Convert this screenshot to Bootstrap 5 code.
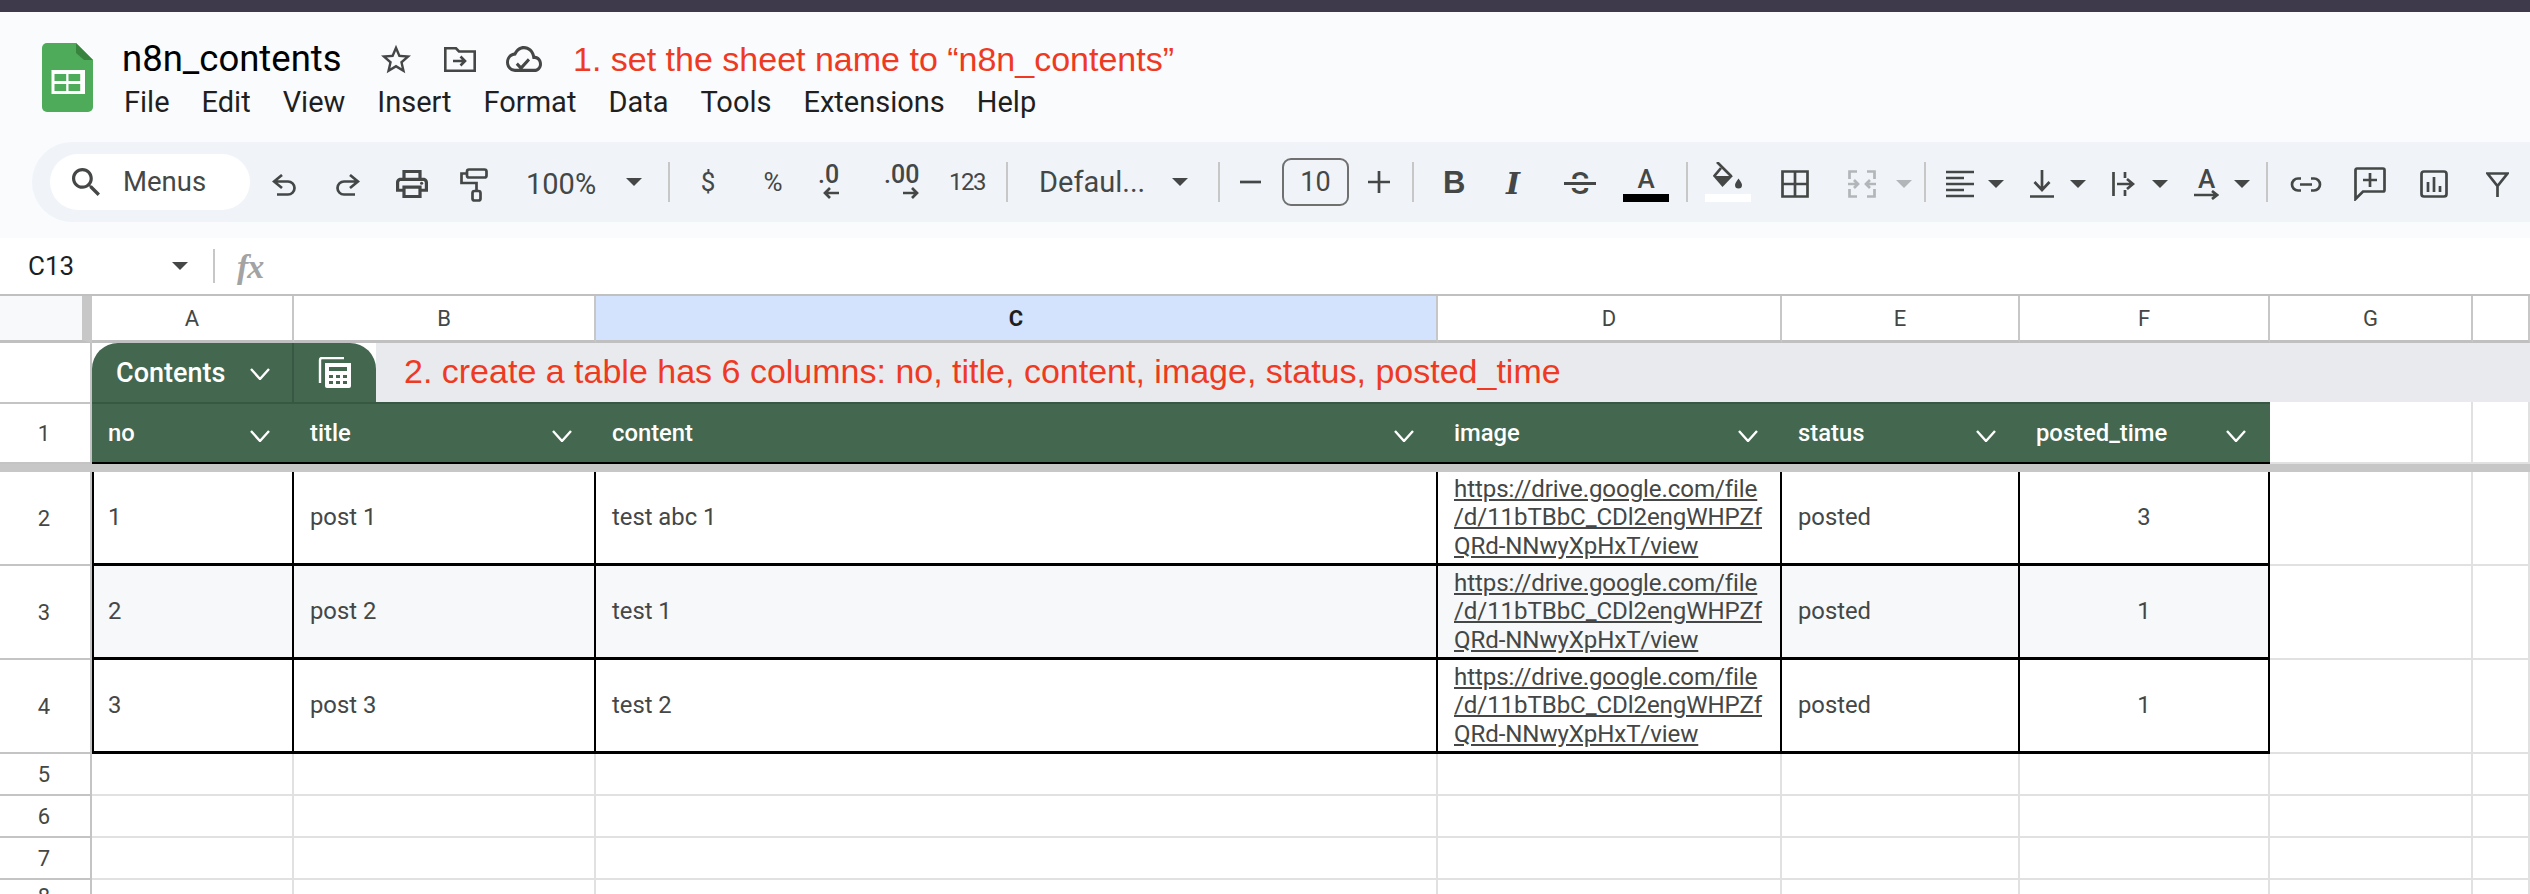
<!DOCTYPE html>
<html>
<head>
    <title>n8n_contents</title>
    <meta charset="UTF-8">
    <link href="https://cdn.jsdelivr.net/npm/bootstrap@5.3.0/dist/css/bootstrap.min.css" rel="stylesheet">
    <style>
        html, body { overflow: hidden; background: #fff; }
        body { width: 2530px; height: 894px; font-family: Roboto, sans-serif; color: #444746; }
        .top-strip { height: 12px; background: #3e3a4c; }
        .app-head { height: 226px; background: #f9fbfd; }
        .title-zone { height: 130px; padding-left: 42px; }
        .doc-logo { margin-top: 31px; }
        .title-side { margin-left: 29px; }
        .title-line { height: 46px; margin-top: 24px; }
        .doc-name { width: 220px; font-size: 36.5px; line-height: 46px; color: #000; }
        .star-ic { margin-left: 39px; }
        .move-ic { margin-left: 33px; }
        .cloud-ic { margin-left: 30px; }
        .note-red { font-family: "Liberation Sans", sans-serif; font-size: 34px; color: #ee3a22; white-space: nowrap; }
        .note-one { margin-left: 31px; }
        .menu-line { height: 46px; gap: 32px; margin-left: 2px; margin-top: -2px; font-size: 29px; color: #1f1f1f; }
        .tool-pill { height: 80px; margin-left: 32px; background: #f0f4f9; border-radius: 40px 0 0 40px; }
        .tool-item { flex: none; display: inline-flex; }
        .find-box { width: 200px; height: 56px; background: #fff; border-radius: 28px; padding-left: 22px; font-size: 27.5px; }
        .find-box span { margin-left: 23px; }
        .tool-text { font-size: 29px; line-height: 34px; white-space: nowrap; }
        .tool-sym { font-size: 26px; line-height: 34px; }
        .tool-num { font-size: 24px; line-height: 34px; letter-spacing: -1.5px; }
        .tool-sep { width: 2px; height: 40px; background: #c7c7c7; }
        .size-box { height: 48px; border: 2px solid #707070; border-radius: 9px; font-size: 27px; }
        .dec-stack { flex-direction: column; font-size: 25px; font-weight: 500; line-height: 20px; }
        .dec-stack svg { align-self: flex-end; margin-top: 2px; }
        .glyph-b { font-family: "Liberation Sans", sans-serif; font-weight: 700; font-size: 31px; line-height: 26px; }
        .glyph-i { font-family: "DejaVu Serif", serif; font-weight: 700; font-style: italic; font-size: 30px; line-height: 28px; }
        .glyph-s { position: relative; font-size: 31px; line-height: 28px; font-weight: 500; justify-content: center; }
        .glyph-s i { position: absolute; left: 0; right: 0; top: 9px; height: 9px; background: #444746; border-top: 3px solid #f0f4f9; border-bottom: 3px solid #f0f4f9; }
        .glyph-a { flex-direction: column; align-items: center; font-size: 26px; font-weight: 500; line-height: 22px; }
        .color-bar { width: 46px; height: 8px; margin-top: 4px; }
        .color-bar-tight { margin-top: 2px; }
        .bar-black { background: #000; }
        .bar-white { background: #fff; }
        .fx-line { height: 56px; background: #fff; padding-left: 28px; }
        .cell-name { width: 144px; font-size: 26px; color: #1f1f1f; }
        .fx-sep { width: 2px; height: 34px; background: #c7c7c7; margin-left: 25px; }
        .fx-mark { margin-left: 22px; font-family: "Liberation Serif", serif; font-style: italic; font-weight: 700; font-size: 34px; color: #a3a3a3; letter-spacing: -1px; }
        .sh-row { display: grid; grid-template-columns: 92px 202px 302px 842px 344px 238px 250px 203px 57px; }
        .sh-cell { display: flex; align-items: center; min-width: 0; border-right: 2px solid #e1e1e1; border-bottom: 2px solid #e1e1e1; padding-left: 16px; padding-top: 1px; font-size: 23.8px; color: #444746; white-space: nowrap; }
        .sh-num { justify-content: center; padding: 0 2px 0 0; border-right: 2px solid #c4c4c4; border-bottom: 2px solid #c4c4c4; font-size: 22px; color: #444746; }
        .col-row { height: 49px; border-top: 2px solid #c0c0c0; }
        .col-row .sh-cell { justify-content: center; padding: 0; border-right-color: #c7c7c7; border-bottom: 3px solid #c0c0c0; font-size: 22px; }
        .col-corner { background: #f8f9fa; border-right: 10px solid #c7c7c7 !important; position: relative; }
        .col-on { background: #d3e3fd; color: #1f1f1f !important; font-weight: 700; }
        .band-row { height: 59px; display: flex; }
        .band-gap { width: 92px; background: #fff; border-right: 2px solid #c4c4c4; }
        .band-fill { flex: 1; background: #e8eaed; }
        .tab-box { width: 284px; height: 59px; background: #43674f; border-radius: 26px 26px 0 0; color: #fff; }
        .tab-name { width: 202px; padding-left: 24px; padding-right: 22px; padding-top: 2px; border-right: 2px solid #375843; height: 100%; font-size: 27px; font-weight: 500; }
        .tab-calc { flex: 1; }
        .note-two { margin-left: 28px; margin-top: -2px; }
        .row-one { height: 62px; }
        .row-one .sh-num { border-top: 2px solid #c4c4c4; }
        .sh-head { background: #43674f; color: #fff; font-weight: 500; justify-content: space-between; padding-top: 2px; padding-right: 24px; border-top: 2px solid #375843; border-right: 0; border-bottom: 2px solid #000; }
        .chev { margin-top: 3px; }
        .freeze-bar { height: 8px; background: #c7c7c7; }
        .row-data { height: 94px; }
        .row-slim { height: 42px; }
        .row-last { height: 20px; }
        .sh-data { border-right: 2px solid #000; border-bottom: 3px solid #000; }
        .sh-first { border-left: 2px solid #000; padding-left: 14px; }
        .row-alt .sh-data { background: #f6f8f9; }
        .sh-mid { justify-content: center; padding: 0; }
        .sh-link { font-size: 24.1px; line-height: 28.3px; text-decoration: underline; color: #444746; padding-right: 0; padding-top: 0; letter-spacing: -.1px; }
    </style>
</head>
<body>
    <div class="top-strip"></div>

    <div class="app-head">
        <div class="title-zone d-flex">
            <svg class="doc-logo" width="51" height="70" viewBox="0 0 51 70">
                <path d="M5 0H34L51 17V64a5 5 0 0 1-5 5H5a5 5 0 0 1-5-5V5a5 5 0 0 1 5-5z" fill="#4eab5a"/>
                <path d="M34 0L51 17H42L34 10z" fill="#38843f"/>
                <path d="M9.500 27h33.500v24h-33.500z" fill="#fff"/>
                <path d="M12.500 31h11.700v7h-11.700zM26.500 31h11.700v7h-11.700zM12.500 41h11.700v7h-11.700zM26.500 41h11.700v7h-11.700z" fill="#4eab5a"/>
            </svg>
            <div class="title-side">
                <div class="title-line d-flex align-items-center">
                    <span class="doc-name">n8n_contents</span>
                    <svg class="star-ic" width="30" height="30" viewBox="2 2 20 19" fill="#444746"><path d="M22 9.240l-7.190-.62L12 2 9.190 8.630 2 9.240l5.460 4.730L5.820 21 12 17.270 18.180 21l-1.630-7.030L22 9.240zM12 15.400l-3.760 2.270 1-4.280-3.320-2.880 4.380-.38L12 6.100l1.710 4.040 4.380.38-3.320 2.880 1 4.280L12 15.400z"/></svg>
                    <svg class="move-ic" width="32" height="25" viewBox="0 0 32 25" fill="none" stroke="#444746" stroke-width="2.600"><path d="M1.300 23.700V1.300H12L15 4.500H30.700V23.700z"/><path d="M9 14H21M16.500 9.500L21 14l-4.500 4.500"/></svg>
                    <svg class="cloud-ic" width="36" height="26" viewBox="0 4 24 16" preserveAspectRatio="none" fill="#444746"><path d="M19.350 10.040C18.670 6.590 15.640 4 12 4 9.110 4 6.600 5.640 5.350 8.040 2.340 8.360 0 10.910 0 14c0 3.310 2.690 6 6 6h13c2.760 0 5-2.240 5-5 0-2.640-2.050-4.780-4.650-4.960zM19 18H6c-2.210 0-4-1.790-4-4 0-2.050 1.530-3.760 3.560-3.970l1.070-.11.5-.95C8.080 7.140 9.940 6 12 6c2.620 0 4.880 1.860 5.390 4.430l.3 1.500 1.530.11c1.560.1 2.780 1.410 2.780 2.960 0 1.650-1.350 3-3 3zm-9-1.820l-2.090-2.090L6.500 15.500 10 19l6.010-6.010-1.410-1.410z"/></svg>
                    <span class="note-red note-one">1. set the sheet name to “n8n_contents”</span>
                </div>
                <div class="menu-line d-flex align-items-center">
                    <span>File</span><span>Edit</span><span>View</span><span>Insert</span><span>Format</span><span>Data</span><span>Tools</span><span>Extensions</span><span>Help</span>
                </div>
            </div>
        </div>
        <div id="toolPill" class="tool-pill d-flex align-items-center"></div>
    </div>

    <div class="fx-line d-flex align-items-center">
        <span class="cell-name">C13</span>
        <svg width="16" height="8" viewBox="0 0 16 8"><path d="M0 0H16L8 8z" fill="#444746"/></svg>
        <span class="fx-sep"></span>
        <span class="fx-mark">fx</span>
    </div>

    <div class="sh-row col-row">
        <div class="sh-cell col-corner"></div>
        <div class="sh-cell">A</div><div class="sh-cell">B</div><div class="sh-cell col-on">C</div><div class="sh-cell">D</div><div class="sh-cell">E</div><div class="sh-cell">F</div><div class="sh-cell">G</div><div class="sh-cell"></div>
    </div>

    <div class="band-row">
        <div class="band-gap"></div>
        <div class="tab-box d-flex">
            <div class="tab-name d-flex align-items-center justify-content-between">
                <span>Contents</span>
                <svg width="20" height="12" viewBox="0 0 20 12" fill="none" stroke="#fff" stroke-width="2.400"><path d="M1 1L10 11 19 1"/></svg>
            </div>
            <div class="tab-calc d-flex align-items-center justify-content-center">
                <svg width="34" height="32" viewBox="0 0 34 32" fill="none"><path d="M2 26V3a2 2 0 0 1 2-2H26" stroke="#fff" stroke-width="2.400"/><path d="M7 6H33V29a2 2 0 0 1-2 2H9a2 2 0 0 1-2-2z" fill="#fff"/><path d="M11 10H29V14H11zM11 18h4v3h-4zM18 18h4v3h-4zM25 18h4v3h-4zM11 24h4v3h-4zM18 24h4v3h-4zM25 24h4v3h-4z" fill="#43674f"/></svg>
            </div>
        </div>
        <div class="band-fill d-flex align-items-center"><span class="note-red note-two">2. create a table has 6 columns: no, title, content, image, status, posted_time</span></div>
    </div>

    <div class="sh-row row-one">
        <div class="sh-cell sh-num">1</div>
        <div class="sh-cell sh-head">no<svg class="chev" width="20" height="12" viewBox="0 0 20 12" fill="none" stroke="#fff" stroke-width="2.400"><path d="M1 1L10 11 19 1"/></svg></div>
        <div class="sh-cell sh-head">title<svg class="chev" width="20" height="12" viewBox="0 0 20 12" fill="none" stroke="#fff" stroke-width="2.400"><path d="M1 1L10 11 19 1"/></svg></div>
        <div class="sh-cell sh-head">content<svg class="chev" width="20" height="12" viewBox="0 0 20 12" fill="none" stroke="#fff" stroke-width="2.400"><path d="M1 1L10 11 19 1"/></svg></div>
        <div class="sh-cell sh-head">image<svg class="chev" width="20" height="12" viewBox="0 0 20 12" fill="none" stroke="#fff" stroke-width="2.400"><path d="M1 1L10 11 19 1"/></svg></div>
        <div class="sh-cell sh-head">status<svg class="chev" width="20" height="12" viewBox="0 0 20 12" fill="none" stroke="#fff" stroke-width="2.400"><path d="M1 1L10 11 19 1"/></svg></div>
        <div class="sh-cell sh-head">posted_time<svg class="chev" width="20" height="12" viewBox="0 0 20 12" fill="none" stroke="#fff" stroke-width="2.400"><path d="M1 1L10 11 19 1"/></svg></div>
        <div class="sh-cell"></div><div class="sh-cell"></div>
    </div>
    <div class="freeze-bar"></div>

    <div class="sh-row row-data">
        <div class="sh-cell sh-num">2</div>
        <div class="sh-cell sh-data sh-first">1</div><div class="sh-cell sh-data">post 1</div><div class="sh-cell sh-data">test abc 1</div>
        <div class="sh-cell sh-data sh-link"><div>https://drive.google.com/file<br>/d/11bTBbC_CDl2engWHPZf<br>QRd-NNwyXpHxT/view</div></div>
        <div class="sh-cell sh-data">posted</div><div class="sh-cell sh-data sh-mid">3</div>
        <div class="sh-cell"></div><div class="sh-cell"></div>
    </div>
    <div class="sh-row row-data row-alt">
        <div class="sh-cell sh-num">3</div>
        <div class="sh-cell sh-data sh-first">2</div><div class="sh-cell sh-data">post 2</div><div class="sh-cell sh-data">test 1</div>
        <div class="sh-cell sh-data sh-link"><div>https://drive.google.com/file<br>/d/11bTBbC_CDl2engWHPZf<br>QRd-NNwyXpHxT/view</div></div>
        <div class="sh-cell sh-data">posted</div><div class="sh-cell sh-data sh-mid">1</div>
        <div class="sh-cell"></div><div class="sh-cell"></div>
    </div>
    <div class="sh-row row-data">
        <div class="sh-cell sh-num">4</div>
        <div class="sh-cell sh-data sh-first">3</div><div class="sh-cell sh-data">post 3</div><div class="sh-cell sh-data">test 2</div>
        <div class="sh-cell sh-data sh-link"><div>https://drive.google.com/file<br>/d/11bTBbC_CDl2engWHPZf<br>QRd-NNwyXpHxT/view</div></div>
        <div class="sh-cell sh-data">posted</div><div class="sh-cell sh-data sh-mid">1</div>
        <div class="sh-cell"></div><div class="sh-cell"></div>
    </div>
    <div class="sh-row row-slim">
        <div class="sh-cell sh-num">5</div><div class="sh-cell"></div><div class="sh-cell"></div><div class="sh-cell"></div><div class="sh-cell"></div><div class="sh-cell"></div><div class="sh-cell"></div><div class="sh-cell"></div><div class="sh-cell"></div>
    </div>
    <div class="sh-row row-slim">
        <div class="sh-cell sh-num">6</div><div class="sh-cell"></div><div class="sh-cell"></div><div class="sh-cell"></div><div class="sh-cell"></div><div class="sh-cell"></div><div class="sh-cell"></div><div class="sh-cell"></div><div class="sh-cell"></div>
    </div>
    <div class="sh-row row-slim">
        <div class="sh-cell sh-num">7</div><div class="sh-cell"></div><div class="sh-cell"></div><div class="sh-cell"></div><div class="sh-cell"></div><div class="sh-cell"></div><div class="sh-cell"></div><div class="sh-cell"></div><div class="sh-cell"></div>
    </div>
    <div class="sh-row row-last">
        <div class="sh-cell sh-num align-items-start">8</div><div class="sh-cell"></div><div class="sh-cell"></div><div class="sh-cell"></div><div class="sh-cell"></div><div class="sh-cell"></div><div class="sh-cell"></div><div class="sh-cell"></div><div class="sh-cell"></div>
    </div>

    <script>
        // toolbar items: left edge in page px, width, markup, shift down in px
        const ink = '#444746';
        const line = (w, h, d, color) => `<svg width="${w}" height="${h}" viewBox="0 0 ${w} ${h}" fill="none" stroke="${color || ink}" stroke-width="2.700"><path d="${d}"/></svg>`;
        const tri = color => `<svg width="16" height="8" viewBox="0 0 16 8"><path d="M0 0H16L8 8z" fill="${color || ink}"/></svg>`;
        const sep = '<span class="tool-sep"></span>';

        const items = [
            [50, 200, `<span class="find-box d-flex align-items-center"><svg width="28" height="28" viewBox="3 3 17.500 17.500" fill="${ink}"><path d="M15.500 14h-.79l-.28-.27C15.410 12.590 16 11.110 16 9.500 16 5.910 13.090 3 9.500 3S3 5.910 3 9.500 5.910 16 9.500 16c1.610 0 3.090-.59 4.230-1.570l.27.28v.79l5 4.990L20.490 19l-4.990-5zm-6 0C7.010 14 5 11.990 5 9.500S7.010 5 9.500 5 14 7.010 14 9.500 11.990 14 9.500 14z"/></svg><span>Menus</span></span>`],
            [272, 24, line(24, 22, 'M10 1L2 7.500 10 14M2 7.500H16a6.500 6.500 0 0 1 0 13H5'), 3],
            [336, 24, line(24, 22, 'M14 1L22 7.500 14 14M22 7.500H8a6.500 6.500 0 0 0 0 13H19'), 3],
            [396, 32, `<svg width="32" height="28" viewBox="2 3 20 18" preserveAspectRatio="none" fill="${ink}"><path d="M19 8h-1V3H6v5H5c-1.660 0-3 1.340-3 3v6h4v4h12v-4h4v-6c0-1.660-1.340-3-3-3zM8 5h8v3H8V5zm8 12v2H8v-4h8v2zm2-2v-2H6v2H4v-4c0-.55.45-1 1-1h14c.55 0 1 .45 1 1v4h-2z"/><circle cx="18" cy="11.500" r="1"/></svg>`, 2],
            [460, 28, `<svg width="28" height="34" viewBox="0 0 28 34" fill="none" stroke="${ink}" stroke-width="2.700"><rect x="7" y="1.500" width="19.500" height="8" rx="2"/><path d="M7 5.500H1.500V15H16.500V23"/><rect x="12.500" y="23" width="8" height="9.500" rx="2"/></svg>`, 3],
            [526, 73, '<span class="tool-text">100%</span>', 2],
            [626, 16, tri(), 0],
            [668, 2, sep],
            [696, 24, '<span class="tool-sym w-100 text-center">$</span>'],
            [758, 30, '<span class="tool-sym w-100 text-center">%</span>'],
            [818, 34, `<span class="dec-stack d-flex">.0${line(16, 12, 'M16 6H2M7 1L2 6 7 11')}</span>`],
            [884, 34, `<span class="dec-stack d-flex">.00${line(16, 12, 'M0 6H14M9 1L14 6 9 11')}</span>`],
            [949, 35, '<span class="tool-num w-100 text-center">123</span>'],
            [1006, 2, sep],
            [1039, 106, '<span class="tool-text">Defaul...</span>'],
            [1172, 16, tri()],
            [1218, 2, sep],
            [1240, 21, line(21, 4, 'M0 2H21')],
            [1282, 67, '<span class="size-box w-100 d-flex align-items-center justify-content-center">10</span>'],
            [1368, 22, line(22, 22, 'M0 11H22M11 0V22')],
            [1412, 2, sep],
            [1443, 18, '<span class="glyph-b">B</span>', 1],
            [1506, 20, '<span class="glyph-i">I</span>', 2],
            [1564, 32, '<span class="glyph-s d-flex w-100">S<i></i></span>', 2],
            [1623, 46, '<span class="glyph-a d-flex">A<span class="color-bar bar-black"></span></span>', 3],
            [1686, 2, sep],
            [1705, 46, `<span class="glyph-a d-flex"><svg width="30" height="30" viewBox="0 0 30 30" fill="${ink}"><path d="M4 0L18.500 14.500" stroke="${ink}" stroke-width="2.700" fill="none"/><path d="M8 6L1 14.500" stroke="${ink}" stroke-width="2.700" fill="none"/><path d="M0 14H20L9.500 25z"/><path d="M25.500 16.500c-2 3-3.500 5-3.500 6.500a3.500 3.500 0 0 0 7 0c0-1.500-1.500-3.500-3.500-6.500z"/></svg><span class="color-bar color-bar-tight bar-white"></span></span>`],
            [1781, 28, line(28, 28, 'M1.500 1.500H26.500V26.500H1.500zM14 1.500V26.500M1.500 14H26.500'), 2],
            [1848, 28, line(28, 28, 'M9 1.500H1.500V9M19 1.500H26.500V9M1.500 19V26.500H9M26.500 19V26.500H19M0 14H10M6 10L10 14 6 18M28 14H18M22 10L18 14 22 18', '#b3b6b9'), 2],
            [1896, 16, tri('#b3b6b9'), 2],
            [1924, 2, sep],
            [1946, 28, line(28, 28, 'M0 2H28M0 8H18M0 14H28M0 20H18M0 26H28'), 2],
            [1988, 16, tri(), 2],
            [2030, 24, line(24, 28, 'M12 0V19M4.500 12L12 20 19.500 12M0 26.500H24'), 2],
            [2070, 16, tri(), 2],
            [2112, 23, line(23, 24, 'M1.500 0V24M13 0V6M13 18V24M5 12H20M15 7L21 12 15 17'), 2],
            [2152, 16, tri(), 2],
            [2194, 25, `<span class="glyph-a d-flex">A${line(25, 10, 'M0 5H23M18 1L23 5 18 9')}</span>`, 2],
            [2234, 16, tri(), 2],
            [2266, 2, sep],
            [2290, 32, line(32, 15, 'M11 1.500H8a6 6 0 0 0 0 12h3M21 1.500h3a6 6 0 0 1 0 12h-3M10 7.500H22'), 2],
            [2354, 32, line(32, 34, 'M1.500 32V3A1.500 1.500 0 0 1 3 1.500H29A1.500 1.500 0 0 1 30.500 3V23A1.500 1.500 0 0 1 29 24.500H9zM16 6V20M9 13H23'), 2],
            [2420, 28, line(28, 28, 'M4 1.500H24A2.500 2.500 0 0 1 26.500 4V24A2.500 2.500 0 0 1 24 26.500H4A2.500 2.500 0 0 1 1.500 24V4A2.500 2.500 0 0 1 4 1.500zM8 12V22M14 7V22M20 16V22'), 2],
            [2486, 23, line(23, 25, 'M1.500 1.500H21.500L11.500 14zM11.500 14V25'), 2]
        ];

        const pill = document.getElementById('toolPill');
        let edge = 32;
        items.forEach(([x, w, html, shift]) => {
            const el = document.createElement('span');
            el.className = 'tool-item';
            el.style.marginLeft = (x - edge) + 'px';
            el.style.width = w + 'px';
            if (shift) el.style.marginTop = (shift * 2) + 'px';
            el.innerHTML = html;
            pill.appendChild(el);
            edge = x + w;
        });
    </script>
    <script src="https://cdn.jsdelivr.net/npm/bootstrap@5.3.0/dist/js/bootstrap.bundle.min.js"></script>
</body>
</html>
